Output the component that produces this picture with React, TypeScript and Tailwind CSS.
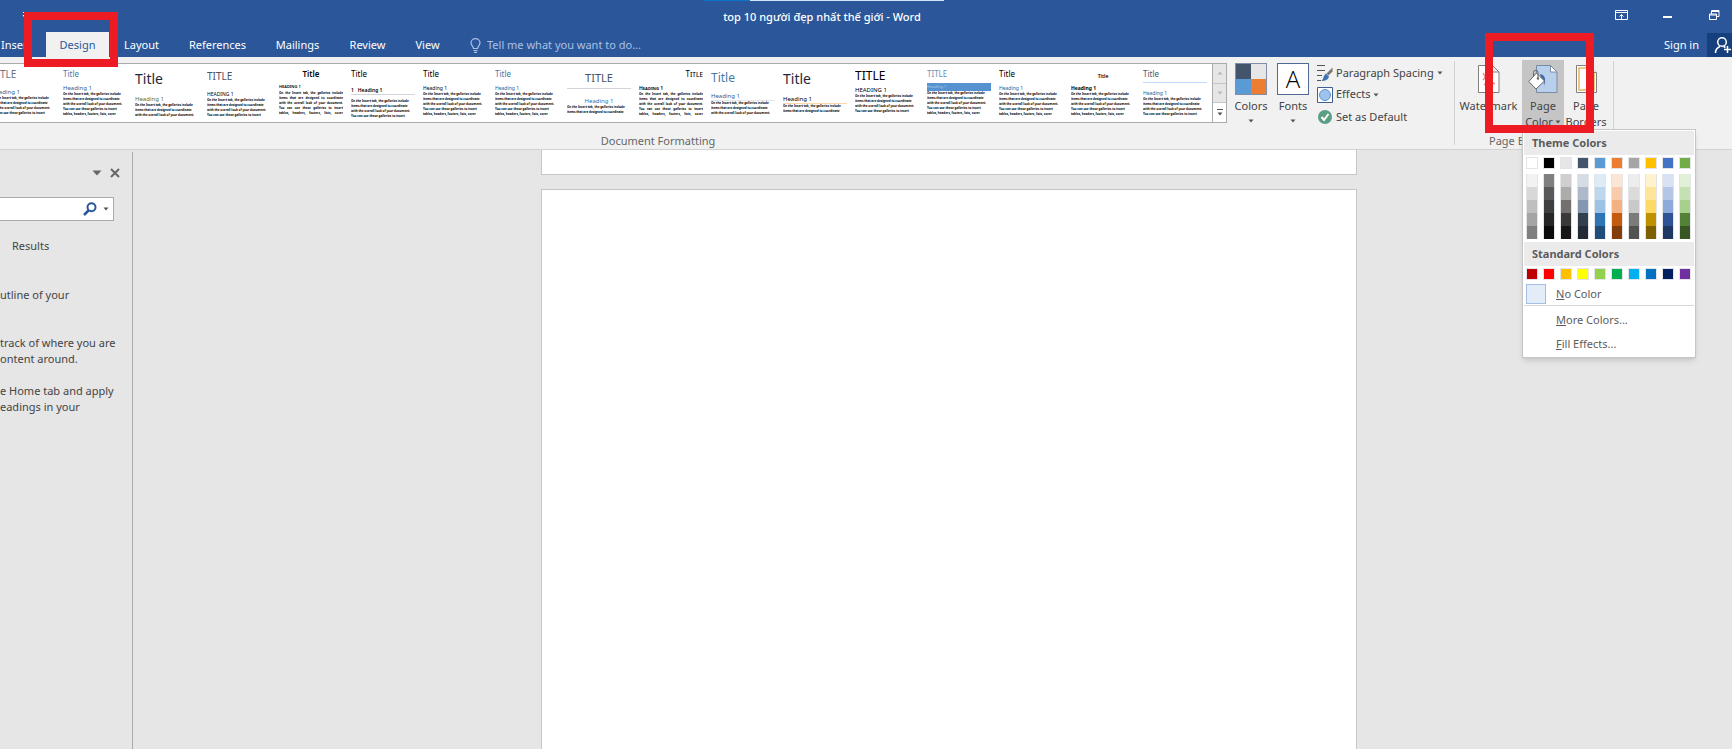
import { ReactNode } from "react";
import clsx from "clsx";

type Preview = {
  title: string;
  heading: string;
  titleClass: string;
  headingClass: string;
  bodyClass?: string;
  lines: number;
}

const bodyText = [
  "On the Insert tab, the galleries include",
  "items that are designed to coordinate",
  "with the overall look of your document.",
  "You can use these galleries to insert",
  "tables, headers, footers, lists, cover",
];

const previews: Preview[] = [
  { title: "TITLE", heading: "Heading 1", titleClass: "mt-1 text-[10px] leading-3 text-gray-500", headingClass: "mt-2 text-[6px] leading-2 text-[#2e6196]", lines: 4 },
  { title: "Title", heading: "Heading 1", titleClass: "mt-1 text-[8px] leading-3 text-[#4c7cae]", headingClass: "mt-1 text-[6px] leading-2 text-[#2e6196]", lines: 5 },
  { title: "Title", heading: "Heading 1", titleClass: "mt-[7px] text-[14px] leading-4 text-gray-800", headingClass: "mt-2 text-[6px] leading-2 text-[#59713d]", lines: 3 },
  { title: "TITLE", heading: "HEADING 1", titleClass: "mt-1.5 text-[10px] leading-3 text-gray-600", headingClass: "mt-2 text-[5px] leading-2 text-black", lines: 4 },
  { title: "Title", heading: "HEADING 1", titleClass: "mt-1 text-[8px] leading-3 text-center font-semibold text-black", headingClass: "mt-[3px] text-[4px] leading-2 font-semibold text-black", bodyClass: "[text-align-last:justify]", lines: 5 },
  { title: "Title", heading: "1   Heading 1", titleClass: "mt-1 text-[8px] leading-3 text-black", headingClass: "my-1 pt-0.5 text-[5px] leading-2 font-semibold text-black border-b border-gray-300 whitespace-pre", lines: 4 },
  { title: "Title", heading: "Heading 1", titleClass: "mt-1 text-[8px] leading-3 text-black", headingClass: "mt-1 text-[5px] leading-2 text-black", lines: 5 },
  { title: "Title", heading: "Heading 1", titleClass: "mt-1 text-[8px] leading-3 text-[#417ba5]", headingClass: "mt-1 text-[5px] leading-2 text-[#2e6196]", lines: 5 },
  { title: "TITLE", heading: "Heading 1", titleClass: "mt-2 pb-1 text-[11px] leading-3 text-center text-gray-600 border-b border-gray-300", headingClass: "mt-2 text-[6px] leading-2 text-center text-[#2e74b5]", lines: 2 },
  { title: "Title", heading: "Heading 1", titleClass: "mt-1 text-[8px] leading-3 text-right text-black [font-variant:small-caps]", headingClass: "mt-1 text-[5px] leading-2 font-semibold text-black [font-variant:small-caps]", bodyClass: "[text-align-last:justify]", lines: 5 },
  { title: "Title", heading: "Heading 1", titleClass: "mt-1 text-[12px] leading-5 text-[#4779a8]", headingClass: "mt-1 text-[6px] leading-2 text-[#2e6196] border-b border-gray-200", lines: 3 },
  { title: "Title", heading: "Heading 1", titleClass: "mt-[7px] text-[14px] leading-4 text-gray-800", headingClass: "mt-2 text-[6px] leading-2 text-black border-b border-orange-200", lines: 2 },
  { title: "TITLE", heading: "HEADING 1", titleClass: "mt-1 text-[12px] leading-4 text-black", headingClass: "mt-0.5 text-[6px] leading-2 text-black", lines: 4 },
  { title: "TITLE", heading: "Heading 1", titleClass: "mt-1 text-[8px] leading-3 text-[#6a91b5]", headingClass: "mt-[3px] text-[4px] leading-2 bg-[#5592cf] text-[#a9cbed]", lines: 5 },
  { title: "Title", heading: "Heading 1", titleClass: "mt-1 text-[8px] leading-3 text-black", headingClass: "mt-1 text-[5px] leading-2 text-[#2e6196]", lines: 5 },
  { title: "Title", heading: "Heading 1", titleClass: "mt-1 text-[5px] leading-4 text-center font-semibold text-black", headingClass: "text-[5px] leading-2 font-bold text-black", lines: 5 },
  { title: "Title", heading: "Heading 1", titleClass: "mt-1 pb-0.5 text-[8px] leading-3 text-gray-600 border-b border-blue-200", headingClass: "mt-1 pt-0.5 text-[5px] leading-2 text-[#2e6196]", lines: 4 },
];

const themeColors = [
  { base: "bg-white", shades: ["bg-[#f2f2f2]", "bg-[#d8d8d8]", "bg-[#bfbfbf]", "bg-[#a5a5a5]", "bg-[#7f7f7f]"] },
  { base: "bg-black", shades: ["bg-[#7f7f7f]", "bg-[#595959]", "bg-[#3f3f3f]", "bg-[#262626]", "bg-[#0c0c0c]"] },
  { base: "bg-[#e7e6e6]", shades: ["bg-[#d0cece]", "bg-[#aeabab]", "bg-[#757070]", "bg-[#3a3838]", "bg-[#171616]"] },
  { base: "bg-[#44546a]", shades: ["bg-[#d6dce4]", "bg-[#adb9ca]", "bg-[#8496b0]", "bg-[#323f4f]", "bg-[#222a35]"] },
  { base: "bg-[#5b9bd5]", shades: ["bg-[#deebf6]", "bg-[#bdd7ee]", "bg-[#9cc3e5]", "bg-[#2e75b5]", "bg-[#1e4e79]"] },
  { base: "bg-[#ed7d31]", shades: ["bg-[#fbe5d5]", "bg-[#f7cbac]", "bg-[#f4b183]", "bg-[#c55a11]", "bg-[#833c0b]"] },
  { base: "bg-[#a5a5a5]", shades: ["bg-[#ededed]", "bg-[#dbdbdb]", "bg-[#c9c9c9]", "bg-[#7b7b7b]", "bg-[#525252]"] },
  { base: "bg-[#ffc000]", shades: ["bg-[#fff2cc]", "bg-[#fee599]", "bg-[#ffd965]", "bg-[#bf9000]", "bg-[#7f6000]"] },
  { base: "bg-[#4472c4]", shades: ["bg-[#d9e2f3]", "bg-[#b4c6e7]", "bg-[#8eaadb]", "bg-[#2f5496]", "bg-[#1f3864]"] },
  { base: "bg-[#70ad47]", shades: ["bg-[#e2efd9]", "bg-[#c5e0b3]", "bg-[#a8d08d]", "bg-[#538135]", "bg-[#375623]"] },
];

const standardColors = [
  "bg-[#c00000]", "bg-[#ff0000]", "bg-[#ffc000]", "bg-[#ffff00]", "bg-[#92d050]",
  "bg-[#00b050]", "bg-[#00b0f0]", "bg-[#0070c0]", "bg-[#002060]", "bg-[#7030a0]",
];

function Caret({ className }: { className?: string }) {
  return (
    <svg viewBox="0 0 6 4" className={clsx("h-1 w-1.5 shrink-0 fill-[#555]", className)} aria-hidden="true">
      <path d="M0.5 0.5h5L3 3.5z" />
    </svg>
  );
}

function Marker({ className }: { className: string }) {
  return <div className={clsx("pointer-events-none absolute z-30 border-8 border-[#ed1c24]", className)} />;
}

function TitleBar() {
  return (
    <div className="relative flex h-8 items-start">
      <div className="absolute top-0 left-[704px] flex h-px w-60">
        <div className="w-[46px] bg-[#0b74c9]" />
        <div className="flex-1 bg-[#cfe6f7]" />
      </div>
      <svg viewBox="0 0 4 6" className="mt-3 ml-[22px] h-1.5 w-1 fill-white" aria-hidden="true">
        <path d="M1 0h2v1H1zM0.5 3h3L2 5z" />
      </svg>
      <h1 className="mt-2 ml-3 flex-1 text-center leading-[18px] font-medium">top 10 người đẹp nhất thế giới - Word</h1>
      <div className="flex w-[126px] shrink-0 items-center pt-[9px] pl-[9px]">
        <button aria-label="Ribbon display options">
          <svg viewBox="0 0 14 12" className="h-3 w-3.5 fill-none stroke-white" aria-hidden="true">
            <path d="M0.5 1.5h12v9h-12zM0.5 3.5h12M6.5 10V5.5M4.5 7.5l2-2 2 2" />
          </svg>
        </button>
        <button className="ml-[34px]" aria-label="Minimize">
          <svg viewBox="0 0 10 12" className="h-3 w-2.5 fill-white" aria-hidden="true">
            <path d="M0 7h9v2H0z" />
          </svg>
        </button>
        <button className="ml-9" aria-label="Restore">
          <svg viewBox="0 0 11 12" className="h-3 w-[11px] fill-none stroke-white" aria-hidden="true">
            <path d="M0.5 5h7v5.5h-7zM0.5 6h7M2.5 5V1.5H10v6H8M2.5 2.5H10" />
          </svg>
        </button>
      </div>
    </div>
  );
}

function Tabs() {
  return (
    <nav className="flex h-[25px] items-start leading-6">
      <button className="w-[46px] pt-px pl-px text-left">Insert</button>
      <div className="relative h-[25px]">
        <button className="block h-[25px] w-[63px] bg-[#f1f1f1] text-[#2b579a]">Design</button>
        <Marker className="-top-5 -right-[9px] -bottom-[10px] -left-[22px]" />
      </div>
      <button className="w-[65px] pt-px">Layout</button>
      <button className="w-[87px] pt-px">References</button>
      <button className="w-[73px] pt-px">Mailings</button>
      <button className="w-[67px] pt-px">Review</button>
      <button className="w-[53px] pt-px">View</button>
      <label className="ml-4 flex items-center pt-px text-[#a9c1e6]">
        <svg viewBox="0 0 11 15" className="h-[15px] w-[11px] fill-none stroke-current" aria-hidden="true">
          <path d="M3.5 10.5C3.5 8.5 1 7.5 1 4.8a4.5 4.2 0 0 1 9 0c0 2.7-2.5 3.7-2.5 5.7zM3.5 12.5h4M4 14.3h3" strokeWidth="1.2" />
        </svg>
        <input placeholder="Tell me what you want to do..." aria-label="Tell me what you want to do" className="ml-[6px] h-6 w-52 placeholder:text-[#a9c1e6] placeholder:opacity-100" />
      </label>
      <button className="mr-2 ml-auto pt-px">Sign in</button>
      <button className="mt-px flex h-6 w-[25px] items-center justify-end overflow-hidden bg-[#153f7d]" aria-label="Share">
        <svg viewBox="0 0 18 18" className="h-[18px] w-[18px] shrink-0 fill-none stroke-white" aria-hidden="true">
          <circle cx="8" cy="6" r="4.3" strokeWidth="1.5" />
          <path d="M1.5 17c0-3.5 2-5.5 4.5-6.5M9.5 10.5l2 1M13.5 10v7M10 13.5h7" strokeWidth="1.5" />
        </svg>
      </button>
    </nav>
  );
}

function StylePreview({ preview }: { preview: Preview }) {
  return (
    <button className="h-[54px] w-[72px] shrink-0 overflow-hidden px-1 text-left">
      <div className="h-full overflow-hidden">
        <div className={preview.titleClass}>{preview.title}</div>
        <div className={preview.headingClass}>{preview.heading}</div>
        <div className={clsx("text-[3px] leading-[5px] font-bold whitespace-nowrap text-black", preview.bodyClass)}>
          {bodyText.slice(0, preview.lines).map((line) => <div key={line}>{line}</div>)}
        </div>
      </div>
    </button>
  );
}

function Gallery() {
  return (
    <div className="flex h-[60px] min-w-0 flex-1 border border-l-0 border-[#ababab] bg-white">
      <div className="flex min-w-0 flex-1 justify-end overflow-hidden pr-px">
        {previews.map((preview, i) => <StylePreview key={i} preview={preview} />)}
      </div>
      <div className="flex w-[14px] shrink-0 flex-col border-l border-[#ababab]">
        <button className="flex flex-1 items-center justify-center border-b border-[#c6c6c6] bg-[#e6e6e6]" aria-label="Scroll up">
          <Caret className="rotate-180 opacity-30" />
        </button>
        <button className="flex flex-1 items-center justify-center border-b border-[#c6c6c6] bg-[#e6e6e6]" aria-label="Scroll down">
          <Caret className="opacity-30" />
        </button>
        <button className="flex flex-1 flex-col items-center justify-center gap-0.5" aria-label="More styles">
          <span className="h-px w-1.5 bg-[#555]" />
          <Caret />
        </button>
      </div>
    </div>
  );
}

function LargeButton({ icon, label, className, children }: { icon: ReactNode; label: ReactNode; className?: string; children?: ReactNode }) {
  return (
    <button className={clsx("flex shrink-0 flex-col items-center whitespace-nowrap", className)}>
      {icon}
      <span className="mt-[3px] leading-4">{label}</span>
      {children}
    </button>
  );
}

function WatermarkIcon() {
  return (
    <svg viewBox="0 0 22 28" className="mb-0.5 h-7 w-[22px] shrink-0 fill-white stroke-[#808080]" aria-hidden="true">
      <path d="M0.5 0.5h14l6.5 6.5v20.5H0.5zM14.5 0.5V7H21" />
      <path d="M5 8l4 7 8 4M5 15l4-5 3 7M6 20l8-8" className="fill-none stroke-[#f0888c]" strokeWidth="1.5" />
    </svg>
  );
}

function PageColorIcon() {
  return (
    <svg viewBox="0 0 30 28" className="mb-0.5 h-7 w-[30px] shrink-0" aria-hidden="true">
      <path d="M8.5 0.5h14L29 7v20.5H8.5z" fill="#b9d0ed" stroke="#7a8aa0" />
      <path d="M22.5 0.5V7H29z" fill="#fff" stroke="#7a8aa0" />
      <path d="M12 9c5 1 6.5 5 4 12 0-4-0.5-6-3-8z" fill="#3f6ca8" />
      <path d="M0.8 16.5L8.5 8l8 8L8 24z" fill="#fff" stroke="#666" />
      <path d="M5.5 12V7.5a2.2 2.2 0 0 1 4.5 0V13" fill="none" stroke="#666" />
      <circle cx="10" cy="13.5" r="1.2" fill="#666" />
    </svg>
  );
}

function PageBordersIcon() {
  return (
    <svg viewBox="0 0 21 28" className="mb-0.5 h-7 w-[21px] shrink-0 fill-white" aria-hidden="true">
      <path d="M0.5 0.5h13l7 7v20H0.5z" stroke="#808080" />
      <path d="M3 3h10v5h5v17H3z" stroke="#e3b75c" strokeWidth="1.5" />
      <path d="M13.5 0.5v7h7" stroke="#808080" />
    </svg>
  );
}

function Swatch({ color, label }: { color: string; label: string }) {
  return <button className={clsx("h-3 w-3 border border-[#e2e4e7]", color)} aria-label={label} />;
}

function PageColorMenu() {
  return (
    <div className="absolute top-[69px] left-0 z-20 w-[174px] border border-[#c6c6c6] bg-white p-px text-[#5c5c5c] shadow-md">
      <h2 className="h-6 bg-[#ebebeb] pl-2 leading-6 font-bold">Theme Colors</h2>
      <div className="mt-0.5 flex justify-between pr-[3px] pl-0.5">
        {themeColors.map((color, i) => <Swatch key={i} color={color.base} label={`Theme color ${i + 1}`} />)}
      </div>
      <div className="mt-[5px] flex justify-between pr-[3px] pl-0.5">
        {themeColors.map((color, i) => (
          <div key={i} className="flex w-3 flex-col border-x border-[#e2e4e7]">
            {color.shades.map((shade, j) => (
              <button key={j} className={clsx("h-[13px]", shade)} aria-label={`Theme color ${i + 1}, shade ${j + 1}`} />
            ))}
          </div>
        ))}
      </div>
      <h2 className="mt-[3px] h-6 bg-[#ebebeb] pl-2 leading-6 font-bold">Standard Colors</h2>
      <div className="mt-0.5 flex justify-between pr-[3px] pl-0.5">
        {standardColors.map((color, i) => <Swatch key={i} color={color} label={`Standard color ${i + 1}`} />)}
      </div>
      <button className="mt-0.5 flex h-6 w-full items-center border-b border-[#d8d8d8] pl-0.5 leading-5">
        <span className="mr-[10px] h-5 w-5 border border-[#a3bde3] bg-[#e3edf9]" />
        <span><u>N</u>o Color</span>
      </button>
      <button className="mt-0.5 block h-6 w-full pl-8 text-left leading-6"><u>M</u>ore Colors...</button>
      <button className="block h-6 w-full pl-8 text-left leading-6"><u>F</u>ill Effects...</button>
    </div>
  );
}

function Ribbon() {
  return (
    <div className="flex h-[93px] border-b border-[#d2d2d2] bg-[#f1f1f1] text-[#444]">
      <section className="flex min-w-0 flex-1 flex-col pt-1.5">
        <div className="flex items-start">
          <Gallery />
          <LargeButton
            className="ml-2 w-8"
            label="Colors"
            icon={
              <span className="grid h-8 w-8 grid-cols-2 border border-[#7f8fa6]">
                <span className="bg-[#44546a]" />
                <span className="bg-[#e7e6e6]" />
                <span className="bg-[#5b9bd5]" />
                <span className="bg-[#ed7d31]" />
              </span>
            }
          >
            <Caret className="mt-[5px]" />
          </LargeButton>
          <LargeButton
            className="ml-[10px] w-8"
            label="Fonts"
            icon={<span className="flex h-8 w-8 items-center justify-center border border-[#4f6b95] bg-white font-['Open_Sans',sans-serif] text-2xl font-light text-black">A</span>}
          >
            <Caret className="mt-[5px]" />
          </LargeButton>
          <div className="ml-2 flex w-[137px] shrink-0 flex-col items-start">
            <button className="flex h-5 items-center gap-[3px] whitespace-nowrap">
              <svg viewBox="0 0 16 16" className="h-4 w-4" aria-hidden="true">
                <path d="M0 0.5h8M0 5.5h8M0 10.5h5M0 15.5h4" stroke="#555" />
                <path d="M15.5 2.5v4l-4 4-2-2z" fill="#777" />
                <path d="M9 8.5l3 3c-1 3.5-4 4.5-7.5 4.5 2-1.5 1.5-5 4.5-7.5z" fill="#3f71b5" />
              </svg>
              Paragraph Spacing
              <Caret />
            </button>
            <button className="flex h-[23px] items-center gap-[3px]">
              <svg viewBox="0 0 16 16" className="h-4 w-4" aria-hidden="true">
                <path d="M0.5 0.5h15v15h-15z" fill="#fff" stroke="#3f5f91" />
                <circle cx="8" cy="8" r="5.5" fill="#9cc3ee" stroke="#5f93cf" />
              </svg>
              Effects
              <Caret />
            </button>
            <button className="flex h-[22px] items-center gap-[3px]">
              <svg viewBox="0 0 16 16" className="h-4 w-4" aria-hidden="true">
                <circle cx="8" cy="8" r="7" fill="#5a9e83" />
                <path d="M4.5 8l2.5 3 4.5-6" fill="none" stroke="#fff" strokeWidth="2" />
              </svg>
              Set as Default
            </button>
          </div>
        </div>
        <div className="mt-1 mr-[138px] text-center leading-[18px] text-[#666]">Document Formatting</div>
      </section>
      <section className="my-1 flex w-40 shrink-0 flex-col border-x border-[#d2d2d2]">
        <div className="relative flex h-[70px]">
          <LargeButton className="w-[67px] pt-1" label="Watermark" icon={<WatermarkIcon />} />
          <div className="relative -mt-px">
            <LargeButton className="h-[70px] w-[42px] bg-[#c5c5c5] pt-[5px]" label="Page" icon={<PageColorIcon />}>
              <span className="flex items-center gap-0.5 leading-4">Color<Caret /></span>
            </LargeButton>
            <PageColorMenu />
            <Marker className="-top-[27px] -right-[30px] -left-[37px] h-[100px]" />
          </div>
          <LargeButton className="w-11 pt-1" label="Page" icon={<PageBordersIcon />}>
            <span className="leading-4">Borders</span>
          </LargeButton>
        </div>
        <div className="mt-0.5 pl-[34px] leading-[18px] whitespace-nowrap text-[#666]">Page Background</div>
      </section>
      <div className="w-[118px] shrink-0" />
    </div>
  );
}

function NavigationPane() {
  return (
    <aside className="mt-0.5 w-[133px] shrink-0 overflow-hidden border-r border-[#ababab] leading-4 whitespace-nowrap">
      <div className="mt-[13px] flex h-4 items-center justify-end gap-2 pr-3">
        <button aria-label="Pane options">
          <svg viewBox="0 0 10 6" className="h-1.5 w-2.5 fill-[#666]" aria-hidden="true"><path d="M0.5 0.5h9L5 5.5z" /></svg>
        </button>
        <button aria-label="Close pane">
          <svg viewBox="0 0 10 10" className="h-2.5 w-2.5 stroke-[#666]" aria-hidden="true"><path d="M1 1l8 8M9 1L1 9" strokeWidth="2" /></svg>
        </button>
      </div>
      <form className="mt-4 mr-[18px] flex h-6 items-center border border-l-0 border-[#ababab] bg-white">
        <input aria-label="Search document" className="h-5 min-w-0 flex-1" />
        <button type="button" aria-label="Search">
          <svg viewBox="0 0 14 14" className="h-3.5 w-3.5 fill-none stroke-[#2b579a]" aria-hidden="true">
            <circle cx="8.5" cy="5.3" r="4" strokeWidth="2" />
            <path d="M5.5 8.5L1 13" strokeWidth="2.5" />
          </svg>
        </button>
        <button type="button" className="mr-1 ml-[6px]" aria-label="Search options"><Caret /></button>
      </form>
      <button className="mt-[17px] ml-3 block">Results</button>
      <p className="mt-[33px]">utline of your</p>
      <p className="mt-8">track of where you are<br />ontent around.</p>
      <p className="mt-4">e Home tab and apply<br />eadings in your</p>
    </aside>
  );
}

export default function App() {
  return (
    <div className="flex h-screen flex-col overflow-hidden bg-[#e6e6e6] font-['Noto_Sans',sans-serif] text-[11px] text-[#444]">
      <header>
        <div className="bg-[#2b579a] text-white">
          <TitleBar />
          <Tabs />
        </div>
        <Ribbon />
      </header>
      <div className="flex min-h-0 flex-1">
        <NavigationPane />
        <main className="flex min-w-0 flex-1 flex-col items-center gap-[14px] pl-[33px]">
          <div className="h-[25px] w-[816px] shrink-0 border border-t-0 border-[#c6c6c6] bg-white" />
          <div className="w-[816px] flex-1 border border-b-0 border-[#c6c6c6] bg-white" />
        </main>
      </div>
    </div>
  );
}
